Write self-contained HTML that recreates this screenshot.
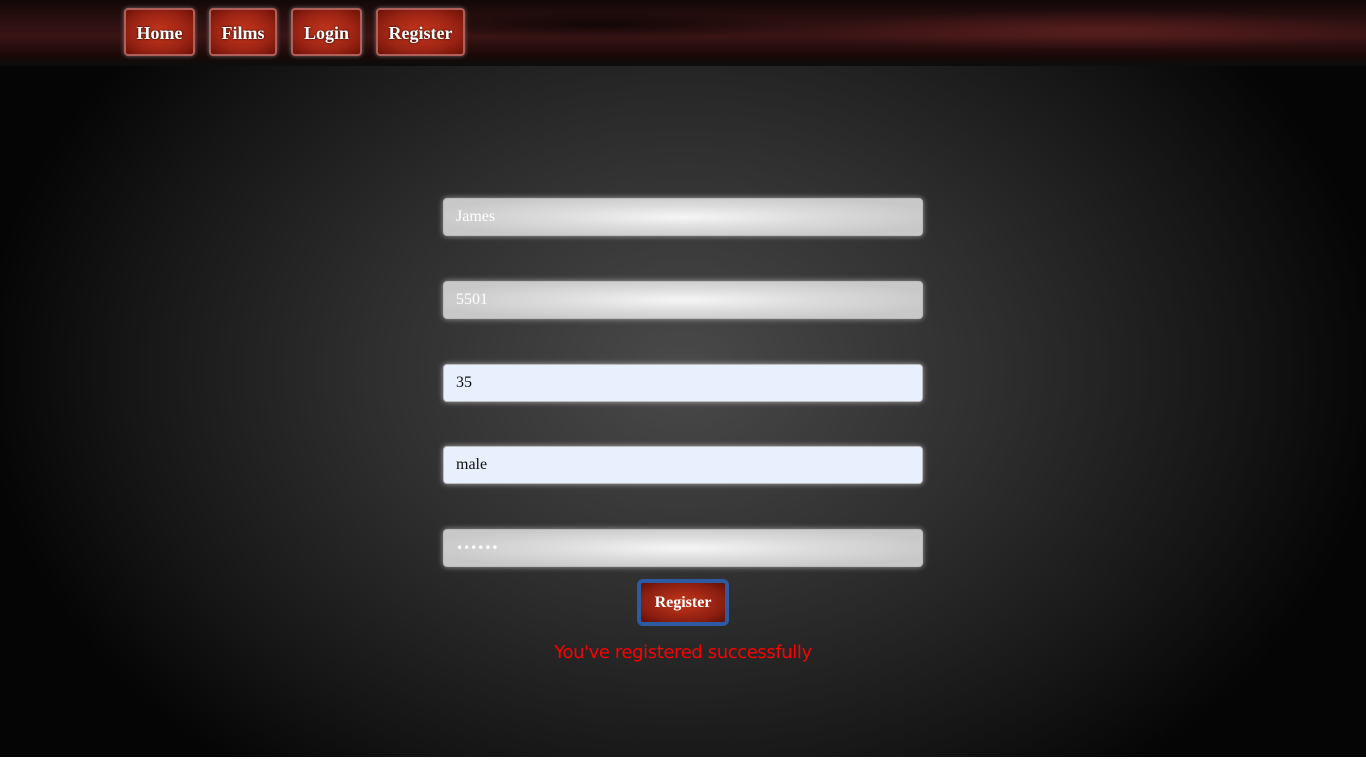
<!DOCTYPE html>
<html><head><meta charset="utf-8"><style>
html,body{margin:0;padding:0;width:1366px;height:768px;background:#fff;overflow:hidden}
#bg{position:absolute;left:0;top:0;width:1366px;height:757px;background:radial-gradient(ellipse 700px 520px at 683px 370px,#4a4a4a 0%,#2e2e2e 45%,#151515 80%,#050505 100%)}
#nav{position:absolute;left:0;top:0;width:1366px;height:66px;background:linear-gradient(180deg,#120808 0%,#2a0f0f 30%,#3a1414 55%,#1a0808 85%,#0d0d0d 100%)}
#nav:after{content:"";position:absolute;left:0;top:0;right:0;bottom:0;background:radial-gradient(ellipse 300px 20px at 1100px 30px,rgba(120,40,40,.5),transparent),radial-gradient(ellipse 200px 14px at 600px 25px,rgba(0,0,0,.6),transparent)}
.nb{position:absolute;top:8px;height:48px;box-sizing:border-box;border:2px solid #b0605a;border-radius:4px;box-shadow:0 0 4px rgba(255,255,255,.4);background:radial-gradient(ellipse at center,#c7361c 0%,#9c2414 60%,#6e1208 100%);color:#fff;font:bold 18px "Liberation Serif",serif;text-align:center;line-height:46px;z-index:2;text-shadow:0 0 2px #000}
.in{position:absolute;left:443px;width:480px;height:38px;box-sizing:border-box;border:1px solid #bbb;border-radius:4px;box-shadow:0 0 6px rgba(255,255,255,.55);font:16px "Liberation Serif",serif;padding-left:12px;line-height:36px}
.g{background:radial-gradient(ellipse 260px 22px at center,#f6f6f6 0%,#dcdcdc 50%,#c8c8c8 100%);color:#fff}
.w{background:#e8f0fe;color:#111}
#btn{position:absolute;left:637px;top:579px;width:92px;height:47px;box-sizing:border-box;border:4px solid #2d5aa0;border-radius:6px;background:radial-gradient(ellipse at center,#c7361c 0%,#8a1e10 70%,#5e0f06 100%);color:#fff;font:bold 16px "Liberation Serif",serif;text-align:center;line-height:39px}
#msg{position:absolute;left:0;width:1366px;top:642px;text-align:center;color:#f00;font:18px "DejaVu Sans","Liberation Sans",sans-serif;letter-spacing:-.4px}
</style></head><body>
<div id="bg"></div>
<div id="nav"></div>
<div class="nb" style="left:124px;width:71px">Home</div>
<div class="nb" style="left:209px;width:68px">Films</div>
<div class="nb" style="left:291px;width:71px">Login</div>
<div class="nb" style="left:376px;width:89px">Register</div>
<div class="in g" style="top:198px">James</div>
<div class="in g" style="top:281px">5501</div>
<div class="in w" style="top:364px">35</div>
<div class="in w" style="top:446px">male</div>
<div class="in g" style="top:529px;font-family:'DejaVu Sans',sans-serif;font-size:12px">••••••</div>
<div id="btn">Register</div>
<div id="msg">You've registered successfully</div>
</body></html>
